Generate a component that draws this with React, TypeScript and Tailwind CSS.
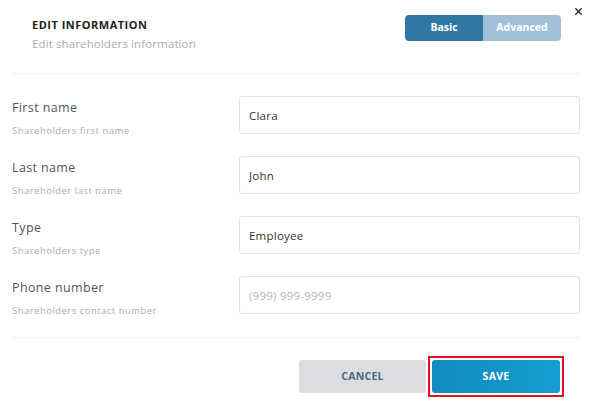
import { X } from "lucide-react";

const fields = [
    { label: "First name", hint: "Shareholders first name", value: "Clara" },
    { label: "Last name", hint: "Shareholder last name", value: "John" },
    { label: "Type", hint: "Shareholders type", value: "Employee" },
    { label: "Phone number", hint: "Shareholders contact number", value: "", placeholder: "(999) 999-9999" },
];

const App = () => {
    return (
        <div className="w-[597px] h-[406px] bg-white relative font-['Open_Sans',sans-serif] overflow-hidden">
            {/* Close */}
            <button className="absolute right-[13px] top-[6px] text-[#222]">
                <X className="w-[11px] h-[11px]" strokeWidth={3} />
            </button>

            {/* Header */}
            <div className="flex justify-between items-start pl-8 pr-9 pt-[17px] h-[73px]">
                <div>
                    <h1 className="text-[11px] font-bold text-[#222] leading-[16px] tracking-[0.045em]">EDIT INFORMATION</h1>
                    <p className="text-[11.5px] text-[#a7adb5] leading-[16px] mt-[3px] tracking-[0.01em]">Edit shareholders information</p>
                </div>
                <div className="flex mt-[-2px] rounded-[4px] overflow-hidden h-[26px]">
                    <button className="w-[78px] bg-[#2f78a6] text-white text-[10.5px] font-bold">Basic</button>
                    <button className="w-[78px] bg-[#a0c1d9] text-white text-[10.5px] font-bold">Advanced</button>
                </div>
            </div>
            <div className="ml-3 mr-[17px] border-t border-[#efefef]" />

            {/* Fields */}
            <div className="flex flex-col gap-[22px] pl-3 pr-[17px] pt-[22px]">
                {fields.map((f) => (
                    <div key={f.label} className="flex items-start h-[38px]">
                        <div className="w-[227px] pt-[4px]">
                            <div className="text-[12.5px] text-[#4f5661] leading-[16px] tracking-[0.03em]">{f.label}</div>
                            <div className="text-[9.5px] text-[#a7adb5] leading-[12px] mt-[9px] tracking-[0.05em]">{f.hint}</div>
                        </div>
                        <input
                            className="flex-1 h-[38px] border border-[#e2e3e6] rounded-[3px] px-[9px] text-[11.5px] text-[#333] placeholder:text-[#b4b8be] outline-none tracking-[0.02em]"
                            defaultValue={f.value}
                            placeholder={f.placeholder}
                        />
                    </div>
                ))}
            </div>

            <div className="ml-3 mr-[17px] mt-[23px] border-t border-[#efefef]" />

            {/* Footer */}
            <div className="flex justify-end pr-[33px] pt-[18px] gap-[2px]">
                <button className="w-[127px] h-[33px] mt-[4px] rounded-[3px] bg-[#dcdde2] text-[#4c6984] text-[10.5px] font-bold tracking-wide">CANCEL</button>
                <div className="border-2 border-[#e3101d] p-[2px]">
                    <button className="w-[128px] h-[33px] rounded-[3px] bg-gradient-to-r from-[#128bbd] to-[#139fd0] text-white text-[10.5px] font-bold tracking-wide">SAVE</button>
                </div>
            </div>
        </div>
    );
};

export default App;
